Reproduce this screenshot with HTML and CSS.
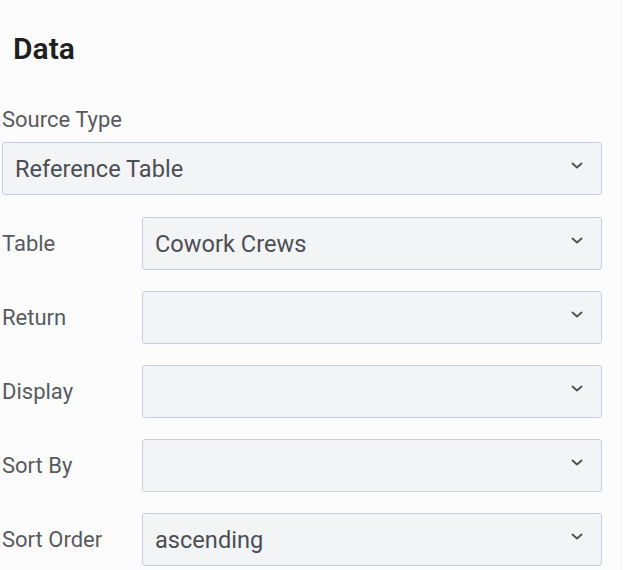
FILE: index.html
```html
<!DOCTYPE html>
<html>
<head>
<meta charset="utf-8">
<link rel="stylesheet" href="styles.css">
</head>
<body>
<div class="page">
  <div class="panel">
    <h2 class="title">Data</h2>
    <div class="field stacked">
      <div class="label">Source Type</div>
      <div class="select"><span class="value">Reference Table</span><svg class="chev" viewBox="0 0 12 7" width="12" height="7"><path d="M1.5 1.5 L6 5.5 L10.5 1.5" fill="none" stroke="#505258" stroke-width="1.9" stroke-linecap="round" stroke-linejoin="round"/></svg></div>
    </div>
    <div class="field row">
      <div class="label">Table</div>
      <div class="select"><span class="value">Cowork Crews</span><svg class="chev" viewBox="0 0 12 7" width="12" height="7"><path d="M1.5 1.5 L6 5.5 L10.5 1.5" fill="none" stroke="#505258" stroke-width="1.9" stroke-linecap="round" stroke-linejoin="round"/></svg></div>
    </div>
    <div class="field row">
      <div class="label">Return</div>
      <div class="select"><span class="value"></span><svg class="chev" viewBox="0 0 12 7" width="12" height="7"><path d="M1.5 1.5 L6 5.5 L10.5 1.5" fill="none" stroke="#505258" stroke-width="1.9" stroke-linecap="round" stroke-linejoin="round"/></svg></div>
    </div>
    <div class="field row">
      <div class="label">Display</div>
      <div class="select"><span class="value"></span><svg class="chev" viewBox="0 0 12 7" width="12" height="7"><path d="M1.5 1.5 L6 5.5 L10.5 1.5" fill="none" stroke="#505258" stroke-width="1.9" stroke-linecap="round" stroke-linejoin="round"/></svg></div>
    </div>
    <div class="field row">
      <div class="label">Sort By</div>
      <div class="select"><span class="value"></span><svg class="chev" viewBox="0 0 12 7" width="12" height="7"><path d="M1.5 1.5 L6 5.5 L10.5 1.5" fill="none" stroke="#505258" stroke-width="1.9" stroke-linecap="round" stroke-linejoin="round"/></svg></div>
    </div>
    <div class="field row">
      <div class="label">Sort Order</div>
      <div class="select"><span class="value">ascending</span><svg class="chev" viewBox="0 0 12 7" width="12" height="7"><path d="M1.5 1.5 L6 5.5 L10.5 1.5" fill="none" stroke="#505258" stroke-width="1.9" stroke-linecap="round" stroke-linejoin="round"/></svg></div>
    </div>
  </div>
  <div class="edge"></div>
</div>
</body>
</html>
```
FILE: styles.css
```css
* { box-sizing: border-box; }
html, body { margin: 0; padding: 0; }
body {
  background: #fcfcfc;
  font-family: Roboto, "Liberation Sans", sans-serif;
  overflow: hidden;
}
.page {
  display: flex;
  height: 570px;
}
.panel {
  flex: 1;
  padding: 32px 21px 0 2px;
}
.edge {
  width: 5px;
  background: #ffffff;
}
.title {
  margin: 0 0 41px 11px;
  font-size: 30px;
  line-height: 34px;
  font-weight: 600;
  color: #1f1f1f;
}
.label {
  font-size: 22px;
  line-height: 26px;
  color: #575a60;
}
.field.stacked {
  display: flex;
  flex-direction: column;
  gap: 9px;
  margin-bottom: 22px;
}
.field.stacked .select {
  flex: none;
}
.field.row {
  display: flex;
  align-items: center;
  margin-bottom: 21px;
}
.field.row .label {
  width: 140px;
  flex: none;
}
.select {
  flex: 1;
  height: 53px;
  border: 1.6px solid #cacbe4;
  border-radius: 3px;
  background: #f3f4f6;
  display: flex;
  align-items: center;
  padding: 0 18px 0 12px;
}
.value {
  flex: 1;
  font-size: 23.6px;
  color: #4b4e54;
}
.chev {
  margin-top: -6px;
}
```
